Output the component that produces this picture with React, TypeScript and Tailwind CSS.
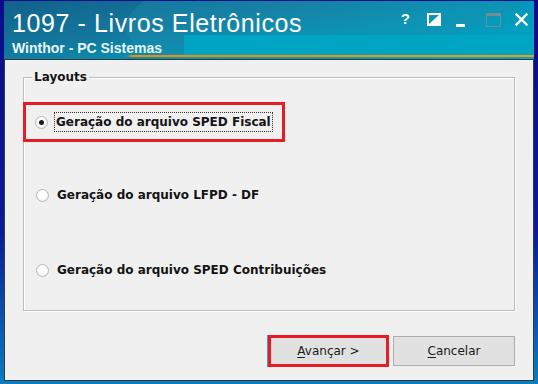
import React from "react";

const uiFont = { fontFamily: '"DejaVu Sans", Verdana, sans-serif' };

function Radio({ checked }: { checked?: boolean }) {
  return (
    <span className="relative flex h-[13px] w-[13px] shrink-0 items-center justify-center rounded-full border border-[#b9b9b9] bg-[radial-gradient(circle_at_50%_40%,#ffffff_40%,#e6e6e6_100%)]">
      {checked && <span className="h-[5px] w-[5px] rounded-full bg-[#1a1a1a]" />}
    </span>
  );
}

function Option({ label, checked, focused, boxed }: { label: string; checked?: boolean; focused?: boolean; boxed?: boolean }) {
  return (
    <div
      className={
        "flex h-[40px] items-center " +
        (boxed ? "w-[262px] border-[3px] border-[#e81c24] pl-[9px]" : "pl-[12px]")
      }
    >
      <Radio checked={checked} />
      <span
        className={
          "ml-[6px] px-[1px] py-[2px] text-[12px] font-bold leading-[14px] text-[#141414] " +
          (focused ? "border border-dotted border-[#333]" : "border border-transparent")
        }
      >
        {label}
      </span>
    </div>
  );
}

export default function App() {
  return (
    <div className="h-[384px] w-[538px] overflow-hidden bg-[linear-gradient(180deg,#0c0c8a_0%,#0b1a98_60%,#0a7ec0_100%)] pl-[4px] pr-[4px] pb-[3px] pt-[1px]" style={uiFont}>
      <div className="flex h-full flex-col">
        {/* Title bar */}
        <div className="relative h-[58px] shrink-0 overflow-hidden bg-[linear-gradient(170deg,#12618a_0%,#13789e_35%,#0496b8_60%,#00a7c6_100%)]">
          <div className="pointer-events-none absolute left-[120px] top-[-60px] h-[120px] w-[420px] rotate-[-8deg] rounded-[50%] bg-[#1b8fb0] opacity-40" />
          <div className="pointer-events-none absolute left-[180px] top-[34px] h-[20px] w-[360px] bg-[#00a5c4]" />
          <div className="absolute bottom-[2px] left-0 right-0 h-[2px] bg-[linear-gradient(90deg,transparent_0,transparent_122px,#f28c00_128px,#f39a10_100%)]" />
          <div className="relative flex h-full items-start justify-between">
            <div className="pl-[8px] pt-[8px]">
              <div className="text-[25px] leading-[28px] tracking-[0.6px] text-white" style={{ fontFamily: '"Liberation Sans", Arial, sans-serif' }}>
                1097 - Livros Eletrônicos
              </div>
              <div className="mt-[3px] text-[14px] font-bold leading-[16px] text-[#e8f6fa]" style={{ fontFamily: '"Liberation Sans", Arial, sans-serif' }}>
                Winthor - PC Sistemas
              </div>
            </div>
            <div className="flex items-start pr-[6px] pt-[12px]">
              <span className="mr-[17px] mt-[-1px] text-[15px] font-bold leading-[14px] text-white" style={{ fontFamily: '"Liberation Sans", Arial, sans-serif' }}>?</span>
              <svg width="14" height="13" viewBox="0 0 14 13" className="mr-[15px]">
                <rect x="1" y="1" width="12" height="11" fill="none" stroke="#fff" strokeWidth="2" />
                <polygon points="1,12 13,1 13,12" fill="#fff" />
              </svg>
              <svg width="10" height="15" viewBox="0 0 10 15" className="mr-[20px]">
                <rect x="0" y="11" width="9" height="3" fill="#fff" />
              </svg>
              <svg width="15" height="14" viewBox="0 0 15 14" className="mr-[14px]">
                <rect x="0.5" y="0.5" width="14" height="13" fill="none" stroke="#6f8e98" />
                <rect x="0" y="0" width="15" height="3" fill="#6f8e98" />
              </svg>
              <svg width="13" height="13" viewBox="0 0 13 13">
                <path d="M1.5 1.5 L11.5 11.5 M11.5 1.5 L1.5 11.5" stroke="#fff" strokeWidth="2.4" strokeLinecap="square" />
              </svg>
            </div>
          </div>
        </div>

        {/* Body panel */}
        <div className="flex flex-1 flex-col border border-[#2f3a3a] bg-[#f0f0f0] px-[18px] pt-[10px]">
          <fieldset className="h-[241px] border border-[#bdbdbd] shadow-[inset_1px_1px_0_#ffffff,1px_1px_0_#ffffff]">
            <legend className="ml-[8px] px-[2px] text-[12px] font-bold leading-[14px] text-[#141414]">Layouts</legend>
            <div className="mt-[18px] flex flex-col">
              <div className="ml-[-1px]">
                <Option label="Geração do arquivo SPED Fiscal" checked focused boxed />
              </div>
              <div className="mt-[33px]">
                <Option label="Geração do arquivo LFPD - DF" />
              </div>
              <div className="mt-[35px]">
                <Option label="Geração do arquivo SPED Contribuições" />
              </div>
            </div>
          </fieldset>

          <div className="mt-[24px] flex justify-end gap-[4px] pr-[0px]">
            <div className="flex h-[32px] w-[121px] items-center justify-center border-[3px] border-[#e81c24] bg-[#e1e1e1] shadow-[-1px_0_0_#3c9be0]">
              <span className="text-[12px] leading-[14px] text-[#1a1a1a]">
                <span className="underline underline-offset-2">A</span>vançar &gt;
              </span>
            </div>
            <div className="mt-[1px] flex h-[30px] w-[122px] items-center justify-center border border-[#adadad] bg-[#e1e1e1]">
              <span className="text-[12px] leading-[14px] text-[#1a1a1a]">
                <span className="underline underline-offset-2">C</span>ancelar
              </span>
            </div>
          </div>
        </div>
      </div>
    </div>
  );
}
